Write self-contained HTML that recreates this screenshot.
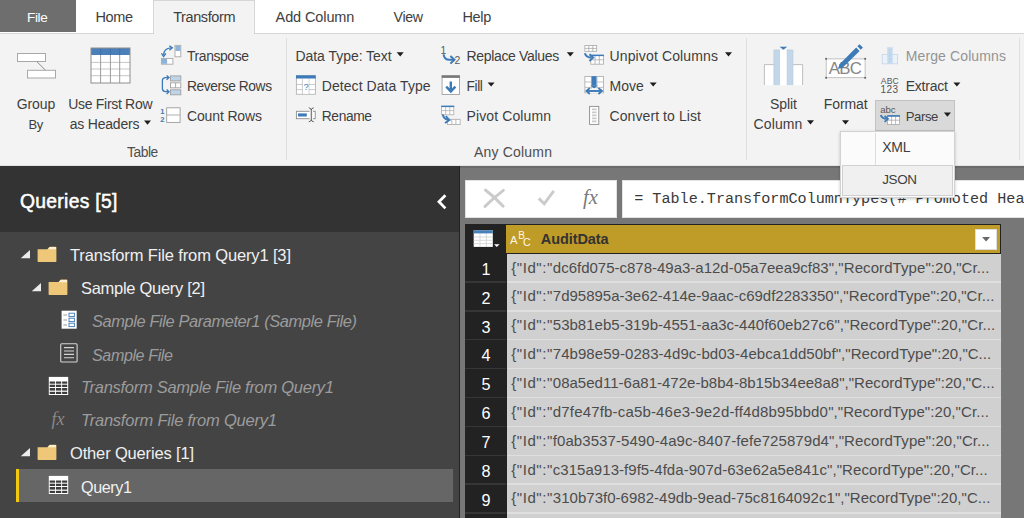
<!DOCTYPE html>
<html lang="en"><head><meta charset="utf-8"><title>Power Query Editor</title>
<style>
html,body{margin:0;padding:0;}
body{width:1024px;height:518px;overflow:hidden;background:#777;font-family:"Liberation Sans",sans-serif;}
#app{position:relative;width:1024px;height:518px;overflow:hidden;}
.t{position:absolute;white-space:pre;z-index:5;}
.b{position:absolute;}
svg{position:absolute;overflow:visible;}
.mono{font-family:"Liberation Mono",monospace;}
.serif{font-family:"Liberation Serif",serif;}

</style></head><body>
<div id="app">
<!-- tab strip -->
<div class="b" style="left:0;top:0;width:1024px;height:33px;background:#fff;"></div>
<div class="b" style="left:0;top:0;width:76px;height:31.5px;background:#6e6e6e;"></div>
<!-- ribbon body -->
<div class="b" style="left:0;top:33px;width:1024px;height:133px;background:#f3f3f3;border-top:1px solid #d6d6d6;box-sizing:border-box;"></div>
<!-- active tab -->
<div class="b" style="left:153px;top:0;width:102px;height:34px;background:#f3f3f3;border:1px solid #d6d6d6;border-bottom:none;box-sizing:border-box;"></div>
<!-- ribbon separators -->
<div class="b" style="left:285.5px;top:38px;width:1px;height:122px;background:#dedede;"></div>
<div class="b" style="left:746px;top:38px;width:1px;height:122px;background:#dedede;"></div>
<div class="b" style="left:1019px;top:38px;width:1px;height:122px;background:#dedede;"></div>
<!-- ribbon bottom edge -->
<div class="b" style="left:0;top:165px;width:1024px;height:1px;background:#e2e2e2;"></div>

<!-- Parse button pressed -->
<div class="b" style="left:875px;top:100px;width:80px;height:31px;background:#d9d9d9;border:1px solid #c2c2c2;box-sizing:border-box;"></div>

<!-- left pane -->
<div class="b" style="left:0;top:166px;width:458.5px;height:66px;background:#333;"></div>
<div class="b" style="left:0;top:232px;width:458.5px;height:286px;background:#444;"></div>
<div class="b" style="left:458.5px;top:166px;width:1.7px;height:352px;background:#222;"></div>
<!-- selected row -->
<div class="b" style="left:16px;top:468.5px;width:437px;height:33.3px;background:#666;"></div>
<div class="b" style="left:16px;top:468.5px;width:3px;height:33.3px;background:#f2c811;"></div>

<!-- center -->
<div class="b" style="left:460.2px;top:166px;width:564px;height:352px;background:#777;"></div>
<div class="b" style="left:460.2px;top:166px;width:564px;height:2px;background:#6a6a6a;"></div>
<!-- formula bar -->
<div class="b" style="left:465.2px;top:180px;width:151.5px;height:37.8px;background:#fff;border:1px solid #e2e2e2;box-sizing:border-box;"></div>
<div class="b" style="left:622px;top:180px;width:404px;height:37.8px;background:#fff;border:1px solid #e2e2e2;box-sizing:border-box;"></div>
<!-- grid -->
<div class="b" style="left:465px;top:224.3px;width:536px;height:294px;background:#222;"></div>
<div class="b" style="left:506px;top:225.3px;width:494px;height:27.4px;background:#bf9b27;"></div>
<div class="b" style="left:975.3px;top:228.5px;width:21.7px;height:21.2px;background:#fff;border:1px solid #ddd;box-sizing:border-box;"></div>
<!-- rows -->
<div class="b" style="left:506.5px;top:253.6px;width:494.5px;height:265px;background:#d0d0d0;"></div>
<div class="b" style="left:506.5px;top:281.45px;width:494.5px;height:1.3px;background:#dfdfdf;"></div>
<div class="b" style="left:465.3px;top:281.45px;width:41.2px;height:1.3px;background:#363636;"></div>
<div class="b" style="left:506.5px;top:310.30px;width:494.5px;height:1.3px;background:#dfdfdf;"></div>
<div class="b" style="left:465.3px;top:310.30px;width:41.2px;height:1.3px;background:#363636;"></div>
<div class="b" style="left:506.5px;top:339.15px;width:494.5px;height:1.3px;background:#dfdfdf;"></div>
<div class="b" style="left:465.3px;top:339.15px;width:41.2px;height:1.3px;background:#363636;"></div>
<div class="b" style="left:506.5px;top:368.00px;width:494.5px;height:1.3px;background:#dfdfdf;"></div>
<div class="b" style="left:465.3px;top:368.00px;width:41.2px;height:1.3px;background:#363636;"></div>
<div class="b" style="left:506.5px;top:396.85px;width:494.5px;height:1.3px;background:#dfdfdf;"></div>
<div class="b" style="left:465.3px;top:396.85px;width:41.2px;height:1.3px;background:#363636;"></div>
<div class="b" style="left:506.5px;top:425.70px;width:494.5px;height:1.3px;background:#dfdfdf;"></div>
<div class="b" style="left:465.3px;top:425.70px;width:41.2px;height:1.3px;background:#363636;"></div>
<div class="b" style="left:506.5px;top:454.55px;width:494.5px;height:1.3px;background:#dfdfdf;"></div>
<div class="b" style="left:465.3px;top:454.55px;width:41.2px;height:1.3px;background:#363636;"></div>
<div class="b" style="left:506.5px;top:483.40px;width:494.5px;height:1.3px;background:#dfdfdf;"></div>
<div class="b" style="left:465.3px;top:483.40px;width:41.2px;height:1.3px;background:#363636;"></div>
<div class="b" style="left:506.5px;top:512.25px;width:494.5px;height:1.3px;background:#dfdfdf;"></div>
<div class="b" style="left:465.3px;top:512.25px;width:41.2px;height:1.3px;background:#363636;"></div>
<div class="b" style="left:506.5px;top:541.10px;width:494.5px;height:1.3px;background:#dfdfdf;"></div>
<div class="b" style="left:465.3px;top:541.10px;width:41.2px;height:1.3px;background:#363636;"></div>
<!-- dropdown popup -->
<div class="b" style="left:839.6px;top:130.7px;width:115.6px;height:67.4px;background:#fbfbfb;border:1px solid #d2d2d2;box-sizing:border-box;z-index:10;box-shadow:0 1px 3px rgba(0,0,0,0.22);"></div>
<div class="b" style="left:875px;top:133px;width:1px;height:32px;background:#dcdcdc;z-index:11;"></div>
<div class="b" style="left:842.2px;top:165.3px;width:110.8px;height:30.6px;background:#f0f0f0;border:1px solid #d0d0d0;box-sizing:border-box;z-index:11;"></div>
<svg id="ribbon-icons" style="left:0;top:0;z-index:4" width="1024" height="166" viewBox="0 0 1024 166" font-family="Liberation Sans, sans-serif">
<!-- Group By -->
<g fill="#fff" stroke="#a8a8a8" stroke-width="1">
<rect x="17.5" y="53.5" width="28" height="8"/>
<rect x="27.5" y="70.3" width="28" height="7.7"/>
</g>
<path d="M37 61.8 L45.3 70" stroke="#8c8c8c" stroke-width="1" fill="none"/>
<!-- Use First Row as Headers -->
<rect x="91" y="48" width="39" height="35" fill="#fff"/>
<rect x="91" y="48" width="39" height="7" fill="#4a7fba"/>
<g stroke="#c6c6c6" stroke-width="1"><path d="M91 62.4H130M91 69H130M91 75.7H130"/></g>
<g stroke="#9c9c9c" stroke-width="1"><path d="M100.6 55V83M110.4 55V83M119.7 55V83"/></g>
<g stroke="#3f70a8" stroke-width="1"><path d="M100.6 48V55M110.4 48V55M119.7 48V55"/></g>
<rect x="91" y="48" width="39" height="35" fill="none" stroke="#8e8e8e" stroke-width="1"/>
<!-- Transpose -->
<rect x="175" y="45.4" width="5.8" height="11.4" fill="#fff" stroke="#a8a8a8" stroke-width="0.9"/>
<rect x="175.4" y="45.8" width="5" height="5.2" fill="#8db3d9"/>
<rect x="161.4" y="58.5" width="11.5" height="5.7" fill="#fff" stroke="#a8a8a8" stroke-width="0.9"/>
<rect x="161.8" y="58.9" width="5.3" height="4.9" fill="#8db3d9"/>
<path d="M163.6 55 Q163.8 48.4 171 47.9" fill="none" stroke="#3d7ab8" stroke-width="1.4"/>
<path d="M161.4 53.4 L163.6 56.6 L165.9 53.4" fill="none" stroke="#3d7ab8" stroke-width="1.3"/>
<path d="M169.3 45.8 L172.3 47.9 L169.4 50.2" fill="none" stroke="#3d7ab8" stroke-width="1.3"/>
<!-- Reverse Rows -->
<g stroke="#a0a0a0" stroke-width="0.9">
<rect x="170.5" y="75.9" width="10.3" height="5" fill="#bdd4ea"/>
<rect x="170.5" y="82.8" width="10.3" height="5" fill="#fff"/>
<rect x="170.5" y="89.8" width="10.3" height="5" fill="#bdd4ea"/>
<path d="M175.6 82.8V87.8"/>
</g>
<path d="M168.4 77.6 H165.5 Q162.4 77.6 162.4 80.7 V88.6 Q162.4 91.7 165.5 91.7 H168.4" fill="none" stroke="#3d7ab8" stroke-width="1.3"/>
<path d="M166.6 75.4 L169 77.6 L166.6 79.8M166.6 89.5 L169 91.7 L166.6 93.9" fill="none" stroke="#3d7ab8" stroke-width="1.3"/>
<!-- Count Rows -->
<rect x="166.7" y="107.8" width="13.4" height="14.6" fill="#fff" stroke="#9c9c9c" stroke-width="0.9"/>
<path d="M166.7 115H180.1" stroke="#b0b0b0" stroke-width="1"/>
<text x="160.3" y="114" font-size="7.6" font-weight="bold" fill="#3d7ab8">1</text>
<text x="160.3" y="122" font-size="7.6" font-weight="bold" fill="#3d7ab8">2</text>
<!-- Detect Data Type -->
<rect x="296" y="75.3" width="19.7" height="19.3" fill="#fff"/>
<g stroke="#c4c4c4" stroke-width="0.9"><path d="M302.4 78.7V94.6M308.9 78.7V94.6M296 84.5H315.7M296 89.6H315.7"/></g>
<rect x="296.4" y="75.7" width="19" height="18.6" fill="none" stroke="#b4b4b4" stroke-width="0.9"/>
<rect x="296" y="75.3" width="19.7" height="3.2" fill="#3d7ab8"/>
<rect x="302.9" y="79.2" width="5.5" height="14.8" fill="#fff"/>
<text x="303.4" y="90.4" font-size="9.2" fill="#3d7ab8">?</text>
<!-- Rename -->
<rect x="296.4" y="111.3" width="18.8" height="7.4" fill="#fff" stroke="#8c8c8c" stroke-width="0.9"/>
<rect x="298" y="113.4" width="8.8" height="3.1" fill="#3d7ab8"/>
<rect x="309.6" y="110" width="3.4" height="10" fill="#f3f3f3"/>
<path d="M311.3 109.4V120.4M308.8 107.8 Q311.3 108.2 311.3 110 Q311.3 108.2 313.8 107.8M308.8 121.8 Q311.3 121.4 311.3 119.8 Q311.3 121.4 313.8 121.8" fill="none" stroke="#555" stroke-width="0.9"/>
<!-- Replace Values -->
<text x="440.4" y="53.7" font-size="10.4" fill="#5a5a5a">1</text>
<text x="454.6" y="64" font-size="10.4" fill="#5a5a5a">2</text>
<path d="M443.6 54.4 Q444.2 59.8 449.6 59.8 H453.6" fill="none" stroke="#3d7ab8" stroke-width="2"/>
<path d="M450.4 56 L454.4 59.8 L450.4 63.6" fill="none" stroke="#3d7ab8" stroke-width="2"/>
<!-- Fill -->
<rect x="442.1" y="76" width="17.4" height="18.5" fill="#fff" stroke="#a0a0a0" stroke-width="0.9"/>
<rect x="441.7" y="75.3" width="18.2" height="2.6" fill="#787878"/>
<path d="M450.8 81.4V91M446.2 86.6 L450.8 91.4 L455.4 86.6" fill="none" stroke="#3d7ab8" stroke-width="2.4"/>
<!-- Pivot Column -->
<rect x="441.6" y="106.4" width="12.2" height="8.4" fill="#fff" stroke="#b0b0b0" stroke-width="0.8"/>
<path d="M445.7 106.4V114.8M449.8 106.4V114.8M441.6 110.6H453.8" stroke="#b0b0b0" stroke-width="0.8"/>
<rect x="441.2" y="105.6" width="13" height="1.5" fill="#3d7ab8"/>
<rect x="447.6" y="119.3" width="12.5" height="5.3" fill="#fff" stroke="#a8a8a8" stroke-width="0.8"/>
<path d="M451.8 119.3V124.6M455.9 119.3V124.6" stroke="#a8a8a8" stroke-width="0.8"/>
<path d="M442.8 114.4 Q443.6 119.2 448 119.8" fill="none" stroke="#3d7ab8" stroke-width="2"/>
<path d="M445.8 116.2 L449.4 120 L445 123" fill="none" stroke="#3d7ab8" stroke-width="1.9"/>
<!-- Unpivot Columns -->
<rect x="584.9" y="45.5" width="11.8" height="5.8" fill="#fff" stroke="#a8a8a8" stroke-width="0.8"/>
<path d="M588.8 45.5V51.3M592.8 45.5V51.3M584.9 48.4H596.7" stroke="#a8a8a8" stroke-width="0.8"/>
<rect x="590.8" y="55.4" width="12.7" height="8.8" fill="#fff" stroke="#a8a8a8" stroke-width="0.8"/>
<path d="M595 55.4V64.2M599.3 55.4V64.2M590.8 59.8H603.5" stroke="#a8a8a8" stroke-width="0.8"/>
<rect x="590.4" y="54.6" width="13.5" height="1.5" fill="#3d7ab8"/>
<path d="M584.8 53.2 Q586.2 57.6 591.6 57.6" fill="none" stroke="#3d7ab8" stroke-width="2"/>
<path d="M589.4 54.2 L593.2 57.6 L589.4 61" fill="none" stroke="#3d7ab8" stroke-width="1.9"/>
<!-- Move -->
<rect x="584.9" y="76.5" width="18.6" height="16.4" fill="#fff" stroke="#a8a8a8" stroke-width="0.8"/>
<path d="M591.4 76.5V92.9M597 76.5V92.9M584.9 82H603.5M584.9 87.4H603.5" stroke="#b4b4b4" stroke-width="0.8"/>
<rect x="591.6" y="76.2" width="4.9" height="9.6" fill="#3d7ab8"/>
<path d="M590.4 85.6 H597.8 L594.1 88.6 Z" fill="#3d7ab8"/>
<rect x="586" y="88.8" width="16.6" height="4.6" fill="#f6f6f6"/>
<path d="M587.4 91H601" stroke="#3d7ab8" stroke-width="1.9" fill="none"/>
<path d="M589.8 88 L586.4 91 L589.8 94M598.4 88 L602 91 L598.4 94" stroke="#3d7ab8" stroke-width="1.8" fill="none"/>
<!-- Convert to List -->
<rect x="589.6" y="106.4" width="9.2" height="18" fill="#fff" stroke="#8c8c8c" stroke-width="0.9"/>
<path d="M592 109.4H596.6M592 112.4H596.6M592 115.4H596.6M592 118.4H596.6M592 121.4H596.6" stroke="#cacaca" stroke-width="1.7"/>
<!-- Split Column -->
<rect x="764.4" y="64.6" width="38.2" height="20.6" fill="#fff"/>
<path d="M764.4 85 V64.6 H802.6 V85" fill="none" stroke="#b8b8b8" stroke-width="0.9"/>
<rect x="773.9" y="50" width="19" height="35.2" fill="#fff"/>
<rect x="773.9" y="50" width="5.6" height="35.2" fill="#c3d7ea"/>
<rect x="787.2" y="50" width="5.7" height="35.2" fill="#c3d7ea"/>
<path d="M773.9 85V50H779.5V85M787.2 85V50H792.9V85" fill="none" stroke="#b4c8dc" stroke-width="0.7"/>
<path d="M779.6 46.8H787.2L783.4 49.8Z" fill="#3d7ab8"/>
<!-- Format -->
<rect x="826.2" y="58.9" width="38.9" height="18.8" fill="#fff" stroke="#b4b4b4" stroke-width="0.8"/>
<g fill="#666"><rect x="825.2" y="57.9" width="1.8" height="1.8"/><rect x="864.3" y="57.9" width="1.8" height="1.8"/><rect x="825.2" y="76.9" width="1.8" height="1.8"/><rect x="864.3" y="76.9" width="1.8" height="1.8"/></g>
<text x="828.8" y="74" font-size="16.8" fill="#858585" letter-spacing="-0.75">ABC</text>
<path d="M837.9 68.9 L839.5 64.2 L856.2 47.5 L859.6 50.9 L842.8 67.6 Z" fill="#3d7ab8"/>
<path d="M857.4 46.3 L859.5 44.2 L862.9 47.6 L860.8 49.7 Z" fill="#3d7ab8"/>
<!-- Merge Columns (disabled) -->
<rect x="882.2" y="54.4" width="15.4" height="9.4" fill="#eaf1f8" stroke="#c4d8ec" stroke-width="0.8"/>
<rect x="887.2" y="47.2" width="5.5" height="16.6" fill="#c6daee"/>
<path d="M890 49V62" stroke="#aac6e2" stroke-width="0.8" stroke-dasharray="1.5 1.5"/>
<!-- Extract -->
<text x="880.8" y="83.9" font-size="8.6" fill="#555" letter-spacing="0.1">ABC</text>
<text x="880.6" y="92.7" font-size="10" fill="#555" letter-spacing="0.35">123</text>
<!-- Parse -->
<text x="880.2" y="113" font-size="9.6" fill="#555" letter-spacing="-0.1">abc</text>
<rect x="887.6" y="116" width="12" height="8.4" fill="#fff" stroke="#a8a8a8" stroke-width="0.8"/>
<path d="M891.6 116V124.4M895.6 116V124.4M887.6 120.2H899.6" stroke="#a8a8a8" stroke-width="0.8"/>
<rect x="887.2" y="115.1" width="12.8" height="1.6" fill="#3d7ab8"/>
<path d="M880.8 115 Q882 118.8 886.6 118.8" fill="none" stroke="#3d7ab8" stroke-width="1.9"/>
<path d="M884.6 115.8 L888 118.8 L884.6 121.8" fill="none" stroke="#3d7ab8" stroke-width="1.8"/>
</svg>
<svg id="arrows" style="left:0;top:0;z-index:6" width="1024" height="166" viewBox="0 0 1024 166"><g fill="#1e1e1e">
<path d="M144.0 120.6h7l-3.5 4.2z"/>
<path d="M396.7 52.2h7l-3.5 4.2z"/>
<path d="M566.8 52.2h7l-3.5 4.2z"/>
<path d="M487.6 82.4h7l-3.5 4.2z"/>
<path d="M725.0 52.2h7l-3.5 4.2z"/>
<path d="M649.7 82.4h7l-3.5 4.2z"/>
<path d="M807.0 120.2h7l-3.5 4.2z"/>
<path d="M842.0 120.2h7l-3.5 4.2z"/>
<path d="M953.4 82.4h7l-3.5 4.2z"/>
<path d="M943.9 112.5h7l-3.5 4.2z"/>
</g></svg>
<svg id="lower-icons" style="left:0;top:166px;z-index:4" width="1024" height="352" viewBox="0 166 1024 352" font-family="Liberation Sans, sans-serif">
<!-- expand triangles -->
<g fill="#ececec">
<path d="M20.7 258.2H30V250Z"/>
<path d="M31.7 291.3H41V283.1Z"/>
<path d="M20.7 456.2H30V448Z"/>
</g>
<!-- folders -->
<defs>
<g id="folder">
<path d="M0 2.5 H9.8 L11.4 0.6 Q11.8 0 12.6 0 H18 Q18.8 0 18.8 0.8 V14.6 Q18.8 15.4 18 15.4 H0.8 Q0 15.4 0 14.6 Z" fill="#eec878"/>
<path d="M11.6 0.9 Q12 0.4 12.6 0.4 H18 Q18.4 0.4 18.4 0.9 V2.6 H10.4 Z" fill="#fbf0d4"/>
</g>
<g id="tbl">
<rect x="0" y="0" width="19.4" height="18.1" fill="#fff"/>
<g fill="#3c3c3c"><rect x="0.9" y="4.6" width="5.4" height="2.2"/><rect x="0.9" y="7.8" width="5.4" height="2.3"/><rect x="0.9" y="11.1" width="5.4" height="2.6"/><rect x="0.9" y="14.9" width="5.4" height="2.2"/><rect x="7.2" y="4.6" width="5.2" height="2.2"/><rect x="7.2" y="7.8" width="5.2" height="2.3"/><rect x="7.2" y="11.1" width="5.2" height="2.6"/><rect x="7.2" y="14.9" width="5.2" height="2.2"/><rect x="13.3" y="4.6" width="5.1" height="2.2"/><rect x="13.3" y="7.8" width="5.1" height="2.3"/><rect x="13.3" y="11.1" width="5.1" height="2.6"/><rect x="13.3" y="14.9" width="5.1" height="2.2"/></g>
</g>
</defs>
<use href="#folder" x="37.6" y="246.7"/>
<use href="#folder" x="48.6" y="279.6"/>
<use href="#folder" x="37.6" y="444.7"/>
<!-- parameter icon -->
<rect x="61.6" y="310.7" width="15.1" height="18" fill="#fff"/>
<g stroke="#9a9a9a" stroke-width="1"><path d="M63.4 315H67M63.4 320H67M63.4 325H67"/></g>
<g fill="none" stroke="#3d7ab8" stroke-width="0.9"><rect x="69" y="313.2" width="5.4" height="3.4"/><rect x="69" y="318.2" width="5.4" height="3.4"/><rect x="69" y="323.2" width="5.4" height="3.4"/></g>
<!-- file icon -->
<rect x="60.7" y="343.8" width="16.4" height="18.2" rx="1" fill="none" stroke="#d4d4d4" stroke-width="1.1"/>
<path d="M64 347.6H74M64 351H74M64 354.4H74M64 357.8H74" stroke="#d4d4d4" stroke-width="1.1"/>
<!-- table icons -->
<use href="#tbl" x="48.8" y="376.9"/>
<use href="#tbl" x="48.8" y="475.9"/>
<!-- fx in list -->
<text x="51.4" y="425" font-family="Liberation Serif, serif" font-style="italic" font-size="18" fill="#8a8a8a">fx</text>
<!-- collapse chevron -->
<path d="M445.4 195.2 L439 201.8 L445.4 208.4" fill="none" stroke="#fff" stroke-width="2.8"/>
<!-- formula bar icons -->
<path d="M485.4 190 Q494 196.4 503.2 206.2M503.4 190.4 Q494 197.4 485 206.4" fill="none" stroke="#cbcbcb" stroke-width="2.9" stroke-linecap="round"/>
<path d="M538.8 198.4 L544.2 203.8 L553.8 190.8" fill="none" stroke="#cbcbcb" stroke-width="2.9"/>
<text x="583" y="203.6" font-family="Liberation Serif, serif" font-style="italic" font-size="20.5" fill="#7a7a7a">fx</text>
<!-- grid corner icon -->
<rect x="473.7" y="230.2" width="19.1" height="16.7" fill="#fff"/>
<path d="M473.7 237H492.8M473.7 240.3H492.8M473.7 243.6H492.8M480 233.4V246.9M486.4 233.4V246.9" stroke="#d4d4d4" stroke-width="0.9" fill="none"/>
<rect x="473.7" y="230.2" width="19.1" height="3.2" fill="#4a80b8"/>
<path d="M494 244.2H499.6L496.8 247Z" fill="#fff"/>
<path d="M982.1 236.9h8l-4 4.6z" fill="#686868"/>
<!-- ABC type icon -->
<text x="510" y="243.9" font-size="11.2" fill="#fff8e6">A</text>
<text x="518.2" y="238.6" font-size="10" fill="#fff8e6">B</text>
<text x="523" y="245.9" font-size="10.6" fill="#fff8e6">C</text>
</svg>

<span class="t" style="left:27.10px;top:10.16px;font-size:13.52px;line-height:15.102px;color:#fff;letter-spacing:-0.400px;">File</span>
<span class="t" style="left:95.40px;top:9.28px;font-size:14.5px;line-height:16.197px;color:#3e3e3e;letter-spacing:-0.363px;">Home</span>
<span class="t" style="left:173.20px;top:9.29px;font-size:14.49px;line-height:16.185px;color:#3e3e3e;letter-spacing:-0.400px;">Transform</span>
<span class="t" style="left:275.60px;top:9.28px;font-size:14.5px;line-height:16.197px;color:#3e3e3e;letter-spacing:-0.111px;">Add Column</span>
<span class="t" style="left:393.60px;top:9.52px;font-size:14.23px;line-height:15.895px;color:#3e3e3e;letter-spacing:-0.400px;">View</span>
<span class="t" style="left:462.40px;top:9.28px;font-size:14.5px;line-height:16.197px;color:#3e3e3e;letter-spacing:-0.309px;">Help</span>
<span class="t" style="left:16.80px;top:97.03px;font-size:14px;line-height:15.638px;color:#3e3e3e;letter-spacing:-0.130px;">Group</span>
<span class="t" style="left:28.40px;top:117.92px;font-size:13.02px;line-height:14.543px;color:#3e3e3e;letter-spacing:-0.400px;">By</span>
<span class="t" style="left:68.30px;top:97.03px;font-size:14px;line-height:15.638px;color:#3e3e3e;letter-spacing:-0.309px;">Use First Row</span>
<span class="t" style="left:69.80px;top:117.03px;font-size:14px;line-height:15.638px;color:#3e3e3e;letter-spacing:-0.222px;">as Headers</span>
<span class="t" style="left:126.90px;top:144.71px;font-size:13.8px;line-height:15.415px;color:#4e4e4e;letter-spacing:-0.400px;">Table</span>
<span class="t" style="left:187.00px;top:49.01px;font-size:13.91px;line-height:15.537px;color:#3e3e3e;letter-spacing:-0.400px;">Transpose</span>
<span class="t" style="left:187.00px;top:79.36px;font-size:13.75px;line-height:15.359px;color:#3e3e3e;letter-spacing:-0.400px;">Reverse Rows</span>
<span class="t" style="left:187.00px;top:109.23px;font-size:14px;line-height:15.638px;color:#3e3e3e;letter-spacing:-0.141px;">Count Rows</span>
<span class="t" style="left:295.40px;top:48.93px;font-size:14px;line-height:15.638px;color:#3e3e3e;letter-spacing:-0.033px;">Data Type: Text</span>
<span class="t" style="left:321.80px;top:79.13px;font-size:14px;line-height:15.638px;color:#3e3e3e;letter-spacing:0.059px;">Detect Data Type</span>
<span class="t" style="left:321.80px;top:109.40px;font-size:13.81px;line-height:15.426px;color:#3e3e3e;letter-spacing:-0.400px;">Rename</span>
<span class="t" style="left:466.50px;top:48.93px;font-size:14px;line-height:15.638px;color:#3e3e3e;letter-spacing:-0.333px;">Replace Values</span>
<span class="t" style="left:466.50px;top:79.34px;font-size:13.77px;line-height:15.381px;color:#3e3e3e;letter-spacing:-0.400px;">Fill</span>
<span class="t" style="left:466.50px;top:109.23px;font-size:14px;line-height:15.638px;color:#3e3e3e;letter-spacing:0.112px;">Pivot Column</span>
<span class="t" style="left:474.00px;top:144.53px;font-size:14px;line-height:15.638px;color:#4e4e4e;letter-spacing:0.193px;">Any Column</span>
<span class="t" style="left:609.50px;top:48.93px;font-size:14px;line-height:15.638px;color:#3e3e3e;letter-spacing:0.135px;">Unpivot Columns</span>
<span class="t" style="left:609.50px;top:79.13px;font-size:14px;line-height:15.638px;color:#3e3e3e;letter-spacing:0.055px;">Move</span>
<span class="t" style="left:609.50px;top:109.23px;font-size:14px;line-height:15.638px;color:#3e3e3e;letter-spacing:0.088px;">Convert to List</span>
<span class="t" style="left:770.00px;top:97.03px;font-size:14px;line-height:15.638px;color:#3e3e3e;letter-spacing:-0.084px;">Split</span>
<span class="t" style="left:753.50px;top:117.03px;font-size:14px;line-height:15.638px;color:#3e3e3e;letter-spacing:0.130px;">Column</span>
<span class="t" style="left:823.80px;top:97.03px;font-size:14px;line-height:15.638px;color:#3e3e3e;letter-spacing:-0.089px;">Format</span>
<span class="t" style="left:905.70px;top:48.93px;font-size:14px;line-height:15.638px;color:#939393;letter-spacing:0.123px;">Merge Columns</span>
<span class="t" style="left:905.70px;top:79.13px;font-size:14px;line-height:15.638px;color:#3e3e3e;letter-spacing:-0.213px;">Extract</span>
<span class="t" style="left:905.70px;top:110.02px;font-size:13.13px;line-height:14.666px;color:#3e3e3e;letter-spacing:-0.400px;">Parse</span>
<span class="t" style="left:882.30px;top:139.63px;font-size:14px;line-height:15.638px;color:#3e3e3e;letter-spacing:-0.298px;z-index:20;">XML</span>
<span class="t" style="left:882.30px;top:172.02px;font-size:13.46px;line-height:15.035px;color:#3e3e3e;letter-spacing:-0.400px;z-index:20;">JSON</span>
<span class="t" style="left:20.00px;top:191.33px;font-size:19.3px;line-height:21.558px;color:#fff;letter-spacing:0.309px;-webkit-text-stroke:0.5px #fff;">Queries [5]</span>
<span class="t" style="left:70.00px;top:246.37px;font-size:16.5px;line-height:18.430px;color:#f0f0f0;letter-spacing:-0.136px;">Transform File from Query1 [3]</span>
<span class="t" style="left:81.00px;top:279.37px;font-size:16.5px;line-height:18.430px;color:#f0f0f0;letter-spacing:-0.293px;">Sample Query [2]</span>
<span class="t" style="left:92.00px;top:312.45px;font-size:16.41px;line-height:18.330px;color:#9c9c9c;letter-spacing:-0.400px;font-style:italic;">Sample File Parameter1 (Sample File)</span>
<span class="t" style="left:92.00px;top:345.73px;font-size:16.1px;line-height:17.984px;color:#9c9c9c;letter-spacing:-0.400px;font-style:italic;">Sample File</span>
<span class="t" style="left:81.00px;top:378.37px;font-size:16.5px;line-height:18.430px;color:#9c9c9c;letter-spacing:-0.279px;font-style:italic;">Transform Sample File from Query1</span>
<span class="t" style="left:81.00px;top:411.37px;font-size:16.5px;line-height:18.430px;color:#9c9c9c;letter-spacing:-0.216px;font-style:italic;">Transform File from Query1</span>
<span class="t" style="left:70.00px;top:444.37px;font-size:16.5px;line-height:18.430px;color:#f0f0f0;letter-spacing:-0.160px;">Other Queries [1]</span>
<span class="t" style="left:81.00px;top:477.68px;font-size:16.16px;line-height:18.051px;color:#f0f0f0;letter-spacing:-0.400px;">Query1</span>
<span class="t mono" style="left:634.20px;top:191.09px;font-size:15.13px;line-height:17.147px;color:#3a3a3a;">= Table.TransformColumnTypes(#&quot;Promoted Headers&quot;</span>
<span class="t" style="left:540.80px;top:230.88px;font-size:14.5px;line-height:16.197px;color:#333;letter-spacing:-0.086px;font-weight:bold;">AuditData</span>
<span class="t" style="left:511.30px;top:259.62px;font-size:15px;line-height:16.755px;color:#4c4c4c;"><span style="letter-spacing:0.547px">{&quot;Id&quot;:&quot;</span><span style="letter-spacing:-0.005px">dc6fd075-c878-49a3-a12d-05a7eea9cf83</span><span style="letter-spacing:0.080px">&quot;,&quot;RecordType&quot;:20,&quot;Cr...</span></span>
<span class="t" style="left:481.50px;top:259.94px;font-size:16.2px;line-height:18.095px;color:#fff;">1</span>
<span class="t" style="left:511.30px;top:288.48px;font-size:15px;line-height:16.755px;color:#4c4c4c;"><span style="letter-spacing:0.547px">{&quot;Id&quot;:&quot;</span><span style="letter-spacing:-0.005px">7d95895a-3e62-414e-9aac-c69df2283350</span><span style="letter-spacing:0.080px">&quot;,&quot;RecordType&quot;:20,&quot;Cr...</span></span>
<span class="t" style="left:481.50px;top:288.79px;font-size:16.2px;line-height:18.095px;color:#fff;">2</span>
<span class="t" style="left:511.30px;top:317.33px;font-size:15px;line-height:16.755px;color:#4c4c4c;"><span style="letter-spacing:0.547px">{&quot;Id&quot;:&quot;</span><span style="letter-spacing:0.014px">53b81eb5-319b-4551-aa3c-440f60eb27c6</span><span style="letter-spacing:0.080px">&quot;,&quot;RecordType&quot;:20,&quot;Cr...</span></span>
<span class="t" style="left:481.50px;top:317.64px;font-size:16.2px;line-height:18.095px;color:#fff;">3</span>
<span class="t" style="left:511.30px;top:346.18px;font-size:15px;line-height:16.755px;color:#4c4c4c;"><span style="letter-spacing:0.547px">{&quot;Id&quot;:&quot;</span><span style="letter-spacing:0.051px">74b98e59-0283-4d9c-bd03-4ebca1dd50bf</span><span style="letter-spacing:0.035px">&quot;,&quot;RecordType&quot;:20,&quot;C...</span></span>
<span class="t" style="left:481.50px;top:346.49px;font-size:16.2px;line-height:18.095px;color:#fff;">4</span>
<span class="t" style="left:511.30px;top:375.03px;font-size:15px;line-height:16.755px;color:#4c4c4c;"><span style="letter-spacing:0.547px">{&quot;Id&quot;:&quot;</span><span style="letter-spacing:0.016px">08a5ed11-6a81-472e-b8b4-8b15b34ee8a8</span><span style="letter-spacing:0.035px">&quot;,&quot;RecordType&quot;:20,&quot;C...</span></span>
<span class="t" style="left:481.50px;top:375.34px;font-size:16.2px;line-height:18.095px;color:#fff;">5</span>
<span class="t" style="left:511.30px;top:403.88px;font-size:15px;line-height:16.755px;color:#4c4c4c;"><span style="letter-spacing:0.547px">{&quot;Id&quot;:&quot;</span><span style="letter-spacing:0.172px">d7fe47fb-ca5b-46e3-9e2d-ff4d8b95bbd0</span><span style="letter-spacing:0.080px">&quot;,&quot;RecordType&quot;:20,&quot;Cr...</span></span>
<span class="t" style="left:481.50px;top:404.19px;font-size:16.2px;line-height:18.095px;color:#fff;">6</span>
<span class="t" style="left:511.30px;top:432.73px;font-size:15px;line-height:16.755px;color:#4c4c4c;"><span style="letter-spacing:0.547px">{&quot;Id&quot;:&quot;</span><span style="letter-spacing:0.073px">f0ab3537-5490-4a9c-8407-fefe725879d4</span><span style="letter-spacing:0.080px">&quot;,&quot;RecordType&quot;:20,&quot;Cr...</span></span>
<span class="t" style="left:481.50px;top:433.04px;font-size:16.2px;line-height:18.095px;color:#fff;">7</span>
<span class="t" style="left:511.30px;top:461.58px;font-size:15px;line-height:16.755px;color:#4c4c4c;"><span style="letter-spacing:0.547px">{&quot;Id&quot;:&quot;</span><span style="letter-spacing:0.041px">c315a913-f9f5-4fda-907d-63e62a5e841c</span><span style="letter-spacing:0.080px">&quot;,&quot;RecordType&quot;:20,&quot;Cr...</span></span>
<span class="t" style="left:481.50px;top:461.89px;font-size:16.2px;line-height:18.095px;color:#fff;">8</span>
<span class="t" style="left:511.30px;top:490.43px;font-size:15px;line-height:16.755px;color:#4c4c4c;"><span style="letter-spacing:0.547px">{&quot;Id&quot;:&quot;</span><span style="letter-spacing:0.028px">310b73f0-6982-49db-9ead-75c8164092c1</span><span style="letter-spacing:0.035px">&quot;,&quot;RecordType&quot;:20,&quot;C...</span></span>
<span class="t" style="left:481.50px;top:490.74px;font-size:16.2px;line-height:18.095px;color:#fff;">9</span>
</div>
</body></html>
